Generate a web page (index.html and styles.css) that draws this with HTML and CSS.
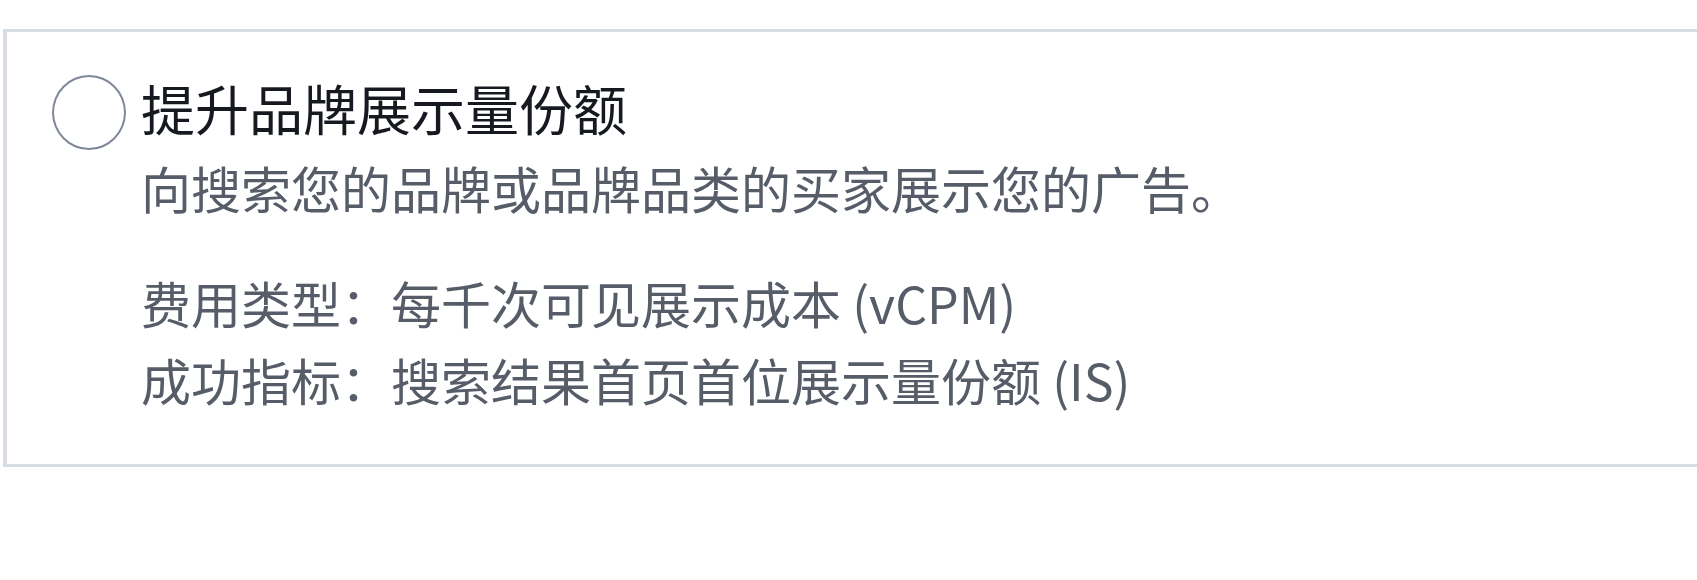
FILE: index.html
```html
<!DOCTYPE html>
<html lang="zh-CN">
<head>
    <meta charset="UTF-8">
    <meta name="viewport" content="width=device-width, initial-scale=1.0">
    <title>广告目标</title>
    <link rel="stylesheet" href="styles.css">
</head>
<body>
    <div class="goal-card">
        <label class="goal-option">
            <span class="radio"></span>
            <span class="goal-text">
                <span class="goal-title">提升品牌展示量份额</span>
                <span class="goal-desc">向搜索您的品牌或品牌品类的买家展示您的广告。</span>
                <span class="goal-meta">
                    <span class="meta-line">费用类型：每千次可见展示成本 (vCPM)</span>
                    <span class="meta-line">成功指标：搜索结果首页首位展示量份额 (IS)</span>
                </span>
            </span>
        </label>
    </div>
</body>
</html>
```

FILE: styles.css
```css
body {
    margin: 0;
    background-color: #ffffff;
    font-family: "Noto Sans CJK SC", "Noto Sans", sans-serif;
    overflow: hidden;
}

.goal-card {
    margin: 29px -20px 0 3px;
    border: 3px solid #d8dce3;
    border-left-width: 4px;
    padding: 40px 0 46px 45px;
}

.goal-option {
    display: flex;
    align-items: flex-start;
    gap: 15px;
    cursor: pointer;
}

.radio {
    flex: none;
    box-sizing: border-box;
    width: 74px;
    height: 75px;
    margin-top: 3px;
    border: 2.5px solid #7f8898;
    border-radius: 50%;
    background-color: #ffffff;
}

.goal-text {
    display: flex;
    flex-direction: column;
}

.goal-title {
    font-size: 54px;
    line-height: 72px;
    color: #16191f;
}

.goal-desc {
    margin-top: 5px;
    font-size: 50px;
    line-height: 77px;
    color: #565d68;
}

.goal-meta {
    display: flex;
    flex-direction: column;
    margin-top: 38px;
}

.meta-line {
    font-size: 50px;
    line-height: 77px;
    color: #565d68;
}
```
